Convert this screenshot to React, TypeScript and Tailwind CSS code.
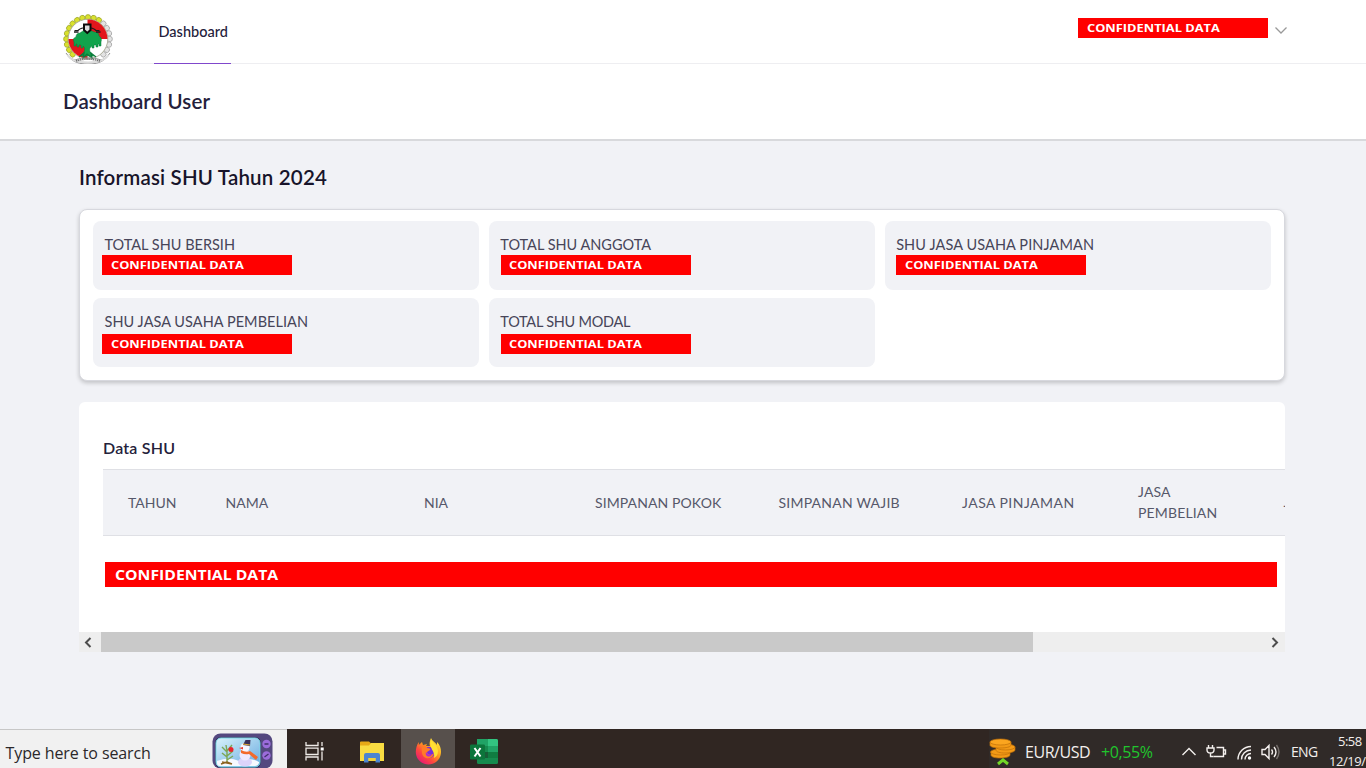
import type { ReactNode } from 'react';

const COG_TEETH = Array.from({ length: 24 }, (_, i) => (i * 360) / 24).filter((a) => a < 140 || a > 220);

function Logo() {
  return (
    <svg width="52" height="51" viewBox="0 0 52 51" className="shrink-0">
      {COG_TEETH.map((a) => (
        <circle
          key={a}
          cx="26"
          cy="4.300"
          r="2.700"
          fill={a > 40 && a < 170 ? '#e2e2e2' : '#d9e12c'}
          stroke={a > 40 && a < 170 ? '#9c9c9c' : '#98a02c'}
          strokeWidth="0.700"
          transform={`rotate(${a} 26 26)`}
        />
      ))}
      <circle cx="26" cy="26" r="19.800" fill="#fff" stroke="#a3a58c" strokeWidth="0.800" />
      <path d="M25.500 26V6.500A19.500 19.500 0 0 1 45.500 26Z" fill="#e3161c" />
      <path d="M25.500 26H6.500a19.500 19.500 0 0 0 19 19.500Z" fill="#e3161c" />
      <path
        d="M25 17c-4 0-5 2-7 3-3 0-4 2-4 4-3 1-3 3-2 5v4h2v-2h1v3h2v-2h2v3h2v-2c2 1 2 4 1 6l-4 4h14l-4-4c-1-3 0-5 2-6v2h2v-3h2v2h2v-3h1v2h2v-4c1-3 0-5-2-6 0-3-2-4-5-4-2-1-4-2-7-2Z"
        fill="#11a34c"
        stroke="#0b7a39"
        strokeWidth="0.500"
      />
      <path d="m17 44 5-4-1 5 4-4 5 4-1-5 5 4" fill="none" stroke="#0c7a3a" strokeWidth="1.300" />
      <path d="M12.500 17.500h3.500c4-4 14-4 18 0h3.500" fill="none" stroke="#1b1b1b" strokeWidth="1.200" />
      <path d="M12 19h4.500M34 19h4.500" stroke="#1b1b1b" strokeWidth="1.500" />
      <path d="M22 11.500h6.500v5.500l-3.250 3-3.250-3Z" fill="#ddd" stroke="#0c0c0c" strokeWidth="2" />
      <path d="M4 40c2 3 5 6 9 7 8-3 18-3 26 0 4-1 7-4 9-7M8 45c4 4 9 6 18 6s14-2 18-6" fill="none" stroke="#858585" strokeWidth="0.900" />
      <path d="M5.500 42c3 5 9 7.500 20.500 7.500S43.500 47 46.500 42" fill="none" stroke="#dcdcdc" strokeWidth="2" />
      <path d="M14 48c8-2.500 16-2.500 24 0" fill="none" stroke="#6f6f6f" strokeWidth="1.600" strokeDasharray="1.400 .7" />
    </svg>
  );
}

function Redacted({ className = '' }: { className?: string }) {
  return (
    <div className={`flex h-5 w-[190px] items-center bg-[#ff0000] pl-[8.500px] ${className}`}>
      <span className="origin-left scale-x-[1.165] font-['Open_Sans',sans-serif] text-[11px] leading-5 font-bold whitespace-nowrap text-white">
        CONFIDENTIAL DATA
      </span>
    </div>
  );
}

function Tile({ label, barClass, labelClass = '' }: { label: string; barClass: string; labelClass?: string }) {
  return (
    <div className="h-[69px] rounded-lg bg-[#f1f2f6] pt-[14px] pl-[11.500px]">
      <div className={`h-[19px] text-[14.500px] leading-5 whitespace-nowrap text-[#474559] ${labelClass}`}>{label}</div>
      <Redacted className={barClass} />
    </div>
  );
}

function Head({ className, children }: { className: string; children?: ReactNode }) {
  return <div className={`shrink-0 ${className}`}>{children}</div>;
}

function SnowmanTv() {
  return (
    <svg width="62" height="36" viewBox="0 0 62 36" className="shrink-0">
      <defs>
        <linearGradient id="sky" x1="0" y1="0" x2="1" y2="1">
          <stop offset="0" stopColor="#d8f3fb" />
          <stop offset="1" stopColor="#68a9e0" />
        </linearGradient>
      </defs>
      <rect x="0.500" y="0.500" width="60" height="35" rx="8" fill="#54487f" />
      <rect x="3" y="4" width="46" height="31" rx="6" fill="#2b2951" />
      <rect x="4" y="5" width="44" height="29" rx="5" fill="url(#sky)" stroke="#7fd9e8" />
      <path d="M5 28q12-5 22 0 12-4 20 1v1q-1 3-4 3H8q-3 0-3-3Z" fill="#f6f9ff" />
      <path d="M15 30V17m0 7-5-4m5 3 6-5m-6 1-5-5m5 4-1-6m1 6 5-6M15 27l6-4" stroke="#7ca653" strokeWidth="1.400" fill="none" />
      <circle cx="19" cy="16.500" r="2.500" fill="#e8252d" />
      <path d="m9 31 6-2 5 2M10 29l10 2" stroke="#8c6321" strokeWidth="1.500" fill="none" />
      <ellipse cx="33" cy="29" rx="7" ry="4.500" fill="#dcd3fb" />
      <circle cx="33" cy="22" r="5.500" fill="#eee9ff" />
      <circle cx="33" cy="14.500" r="4.500" fill="#f8f5ff" />
      <path d="M29 17q5 3 9 1l8 6-2 3-7-6q-4 1-8-1Z" fill="#f36b2c" />
      <path d="m31 14-4 1 4 1.500Z" fill="#e83b2c" />
      <path d="m31 12 7 1 .5-6h-5Z" fill="#3a315b" />
      <path d="m31 11 7 1" stroke="#e4ad38" strokeWidth="1.200" />
      <circle cx="54.500" cy="11" r="4.200" fill="#9b6cdb" />
      <circle cx="54.500" cy="22.500" r="4.200" fill="#9b6cdb" />
      <path d="M52.500 11h4M52.500 24l4-3" stroke="#40306b" strokeWidth="1.300" />
    </svg>
  );
}

function TaskView() {
  return (
    <svg width="20" height="19" viewBox="0 0 20 19" fill="none" stroke="#eeeae7" strokeWidth="1.300">
      <path d="M1 0v3.500h12V0M1 18.500V15h12v3.500M1 6.200h12v6.300H1ZM17 0v4M17 9.500v9" />
      <rect x="15.700" y="5.500" width="3" height="3" fill="#fff" stroke="none" />
    </svg>
  );
}

function Folder() {
  return (
    <svg width="26" height="22" viewBox="0 0 26 22">
      <path d="M1 1.500Q1 .5 2 .5h8l2 2h12q1 0 1 1V19H1Z" fill="#e6a917" />
      <path d="M1 4.500h9l2-2.500h13v18H1Z" fill="#f8dc42" />
      <path d="M5 21.500V14q0-2 2-2h12q2 0 2 2v7.500h-4.500V17h-7v4.500Z" fill="#4c85d0" />
      <path d="M9.500 17h7v3h-7Z" fill="#f1d139" />
    </svg>
  );
}

function Firefox() {
  return (
    <svg width="27" height="27" viewBox="0 0 27 27">
      <defs>
        <linearGradient id="flame" x1="1" y1="0" x2="0.200" y2="1">
          <stop offset="0.100" stopColor="#fff23c" />
          <stop offset="0.450" stopColor="#ffa01e" />
          <stop offset="0.700" stopColor="#ff493d" />
          <stop offset="1" stopColor="#e5127c" />
        </linearGradient>
      </defs>
      <path
        d="M16 0c1 3 4 4 6 7V4c3 3 4 6 4 10 0 7-5.500 12.500-12.500 12.500S.8 21 .8 14c0-4 1-7 3-10v3L7 4l1 3 4-1-1 2h4c-1-3 0-5 1-8Z"
        fill="url(#flame)"
      />
      <circle cx="14" cy="14.500" r="5.800" fill="#7430dc" />
      <path d="M8 7q3 0 4 3c3 0 4 1 3 2l-3 2c0 3 5 4 7 1-1 7-11 7-12 0 0-3-1-5 1-8Z" fill="#ff7b28" />
      <path d="M11 14q2 4 6 2-1 3-4 2.500-3-1-2-4.500Z" fill="#b02ad0" />
      <path d="M16 1c1 4 7 6 7 12 0 4-2 6-4 7 2-7-6-9-3-19Z" fill="#ffe034" />
    </svg>
  );
}

function Excel() {
  return (
    <svg width="28" height="25" viewBox="0 0 28 25">
      <rect x="7" y="0" width="21" height="25" rx="1.500" fill="#168b4e" />
      <path d="M7 0h11v7H7Z" fill="#20a365" />
      <path d="M18 0h8.500q1.500 0 1.500 1.500V7H18Z" fill="#33c481" />
      <path d="M18 7h10v6H18Z" fill="#21a366" />
      <path d="M7 13h11v6H7Z" fill="#185c37" />
      <path d="M18 13h10v6H18Z" fill="#107c41" />
      <rect x="0" y="5.500" width="15" height="15" rx="1.300" fill="#0c753b" />
      <path d="m4.500 9 6 8.500M10.500 9l-6 8.500" stroke="#fff" strokeWidth="2" />
    </svg>
  );
}

function Coins() {
  return (
    <svg width="27" height="28" viewBox="0 0 27 28">
      <g fill="#f39a16" stroke="#c07008" strokeWidth="0.700">
        <path d="M2 14v3c0 2 4 3 9 3s10-1 10-3v-3Z" />
        <ellipse cx="11.500" cy="14" rx="10" ry="3" />
        <path d="M7 9v3c0 2 4 3 9 3s10-1 10-3V9Z" />
        <ellipse cx="16.500" cy="9" rx="9.500" ry="3" />
        <path d="M1 4v3c0 2 4 3 10 3s11-1 11-3V4Z" />
        <ellipse cx="11.500" cy="4" rx="10.500" ry="3" fill="#fba51f" />
      </g>
      <path d="m9 26 5-4 5 4" fill="none" stroke="#72d728" strokeWidth="3" />
    </svg>
  );
}

function Taskbar() {
  return (
    <footer className="flex h-[39px] shrink-0 overflow-hidden bg-[#302622] font-['Open_Sans',sans-serif] text-[#f3efed]">
      <div className="flex h-full w-[287px] shrink-0 border-t border-[#c7c7c7] bg-[#f1f1f1]">
        <div className="w-[212px] pt-[11px] pl-[5.500px] text-[16px] leading-[24px] tracking-[-0.100px] whitespace-nowrap text-[#2b282a]">
          Type here to search
        </div>
        <div className="pt-[3px]">
          <SnowmanTv />
        </div>
      </div>
      <div className="flex w-[56px] justify-center pt-[13px] pr-px">
        <TaskView />
      </div>
      <div className="flex w-[58px] justify-center pt-3">
        <Folder />
      </div>
      <div className="flex w-[54px] justify-center bg-[#57504c] pt-[9px]">
        <Firefox />
      </div>
      <div className="flex w-[58px] justify-center pt-[10px]">
        <Excel />
      </div>
      <div className="ml-auto flex h-full w-[377px] shrink-0 bg-[#302a28]">
        <div className="w-[36px] shrink-0 pt-[9px]">
          <Coins />
        </div>
        <div className="w-[76px] shrink-0 pt-[11px] text-[16px] leading-6 tracking-[-0.450px] whitespace-nowrap">EUR/USD</div>
        <div className="w-[80px] shrink-0 pt-[11px] text-[16px] leading-6 tracking-[-0.400px] whitespace-nowrap text-[#20c52d]">+0,55%</div>
        <svg width="108" height="39" viewBox="0 0 108 39" fill="none" stroke="#f3efed" strokeWidth="1.400" className="shrink-0">
          <path d="m1.500 26 6.500-6.500 6.500 6.500" />
          <path d="M35.500 18.500h7v9H32.500M42.500 21h2v4h-2" />
          <path d="M27.500 16v3M31.500 16v3M26 19h7v2q0 3-3.500 3T26 21ZM29.500 24v3.500h3" />
          <path d="M57 30.500a13 13 0 0 1 13-13M60.500 30.500a9.500 9.500 0 0 1 9.500-9.500M64 30.500a6 6 0 0 1 6-6" />
          <circle cx="68.500" cy="29" r="1.700" fill="#fff" stroke="none" />
          <path d="M81 20.500h3l4-4v13l-4-4h-3ZM90.500 20.500q2 2.500 0 5M93 18q4 5 0 10" />
          <path d="M95.500 16q5 7 0 14" stroke="#756f6c" />
        </svg>
        <div className="w-[40px] shrink-0 pt-[11px] pl-[2px] text-[14px] leading-6 tracking-[-0.700px] whitespace-nowrap">ENG</div>
        <div className="shrink-0 pt-[2px] text-[13px] leading-[20px] tracking-[-0.500px] whitespace-nowrap">
          <div className="pl-[9px]">5:58</div>
          <div className="tracking-[-0.450px]">12/19/</div>
        </div>
      </div>
    </footer>
  );
}

export default function App() {
  return (
    <div className="flex h-[768px] w-[1366px] flex-col overflow-hidden bg-[#f1f2f6] font-['Lato','Liberation_Sans',sans-serif] text-[#24213b]">
      <nav className="flex h-16 shrink-0 border-b border-[#eeeef1] bg-white">
        <div className="w-[154px] pt-[12.500px] pl-[62px]">
          <Logo />
        </div>
        <div className="flex h-16 w-[77px] shrink-0 flex-col justify-between pt-[22px] text-[14.500px] leading-5 font-medium whitespace-nowrap">
          <span className="pl-[4.500px]">Dashboard</span>
          <span className="h-[1.500px] bg-[#8048cc]" />
        </div>
        <div className="ml-auto flex w-[288px] pt-[18px]">
          <Redacted />
          <svg width="14" height="9" viewBox="0 0 14 9" fill="none" stroke="#999" strokeWidth="1.300" className="mt-2 ml-[6px]">
            <path d="m1.500 1.500 5.500 5.500 5.500-5.500" />
          </svg>
        </div>
      </nav>
      <header className="h-[77px] shrink-0 border-b-2 border-[#d8d9dc] bg-white pt-[23px] pl-[63px]">
        <h1 className="text-[20.500px] leading-7 font-semibold tracking-[0.100px]">Dashboard User</h1>
      </header>
      <main className="flex min-h-0 flex-1 flex-col pr-[81px] pl-[79px]">
        <h2 className="mt-[22px] h-7 text-[20.500px] leading-7 font-semibold tracking-[0.180px] text-[#17142a]">
          Informasi SHU Tahun 2024
        </h2>
        <section className="mt-[18px] mr-[0.500px] grid h-[172px] shrink-0 grid-cols-3 content-start gap-x-[9.500px] gap-y-[8px] rounded-lg border border-[#d7d8de] bg-white pt-[11px] pr-[12.500px] pl-[13px] shadow-[0_2px_4px_rgba(0,0,0,0.2)]">
          <Tile label="TOTAL SHU BERSIH" barClass="mt-px -ml-[2.500px]" />
          <Tile label="TOTAL SHU ANGGOTA" barClass="mt-px ml-[0.500px]" />
          <Tile label="SHU JASA USAHA PINJAMAN" barClass="mt-px" labelClass="tracking-[0.100px]" />
          <Tile label="SHU JASA USAHA PEMBELIAN" barClass="mt-[3px] -ml-[2.500px]" labelClass="tracking-[0.050px]" />
          <Tile label="TOTAL SHU MODAL" barClass="mt-[3px] ml-[0.500px]" labelClass="tracking-[-0.250px]" />
        </section>
        <section className="mt-[21px] h-[250px] shrink-0 overflow-hidden rounded-t-md bg-white">
          <div className="h-[230px] overflow-hidden pt-[33px] pl-6">
            <h3 className="h-[34px] text-[16px] leading-[26px] font-semibold tracking-[0.200px]">Data SHU</h3>
            <div className="flex h-[67px] items-center overflow-hidden border-y border-[#dfe0e5] bg-[#f1f2f6] pl-[25px] text-[14px] leading-[20.500px] text-[#56586a]">
              <Head className="w-[97.500px] pt-px">TAHUN</Head>
              <Head className="w-[198.500px] pt-px">NAMA</Head>
              <Head className="w-[171px] pt-px">NIA</Head>
              <Head className="w-[183.500px] pt-px tracking-[0.100px]">SIMPANAN POKOK</Head>
              <Head className="w-[183.500px] pt-px tracking-[0.220px]">SIMPANAN WAJIB</Head>
              <Head className="w-[176px] pt-px tracking-[0.450px]">JASA PINJAMAN</Head>
              <Head className="w-[145.500px] tracking-[0.150px]">
                JASA
                <br />
                PEMBELIAN
              </Head>
              <Head className="w-[90px]">JASA</Head>
            </div>
            <div className="mt-[26px] ml-[2px] flex h-[25px] w-[1172px] items-center bg-[#ff0000] pl-[10px]">
              <span className="origin-left scale-x-[1.125] font-['Open_Sans',sans-serif] text-[14px] leading-[25px] font-bold whitespace-nowrap text-white">
                CONFIDENTIAL DATA
              </span>
            </div>
          </div>
          <div className="flex h-5 bg-[#eeeeee]">
            <div className="flex w-[22px] items-center justify-center pr-1">
              <svg width="8" height="11" viewBox="0 0 8 11" fill="none" stroke="#4d4d4d" strokeWidth="2">
                <path d="M6.500 1 2 5.500 6.500 10" />
              </svg>
            </div>
            <div className="w-[932px] bg-[#c9c9c9]" />
            <div className="ml-auto flex w-[20px] items-center justify-center">
              <svg width="8" height="11" viewBox="0 0 8 11" fill="none" stroke="#4d4d4d" strokeWidth="2">
                <path d="M1.500 1 6 5.500 1.500 10" />
              </svg>
            </div>
          </div>
        </section>
      </main>
      <Taskbar />
    </div>
  );
}
